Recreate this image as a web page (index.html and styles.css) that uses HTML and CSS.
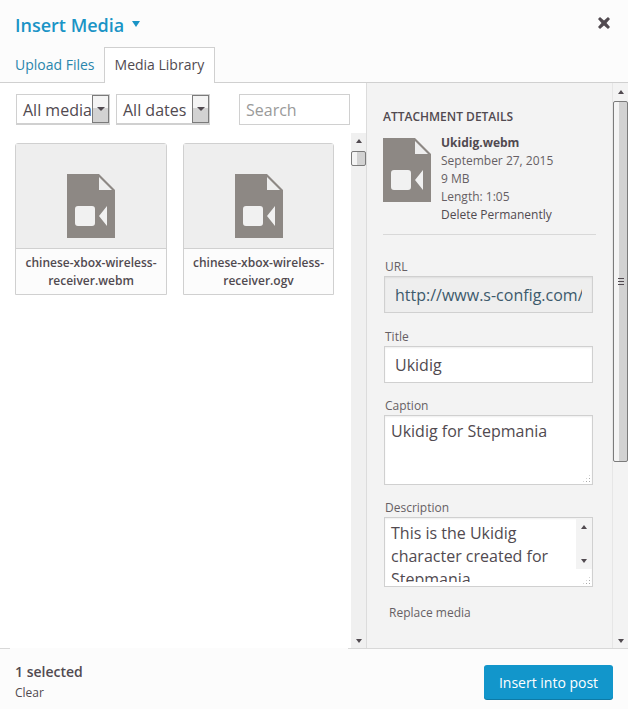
FILE: index.html
```html
<!DOCTYPE html>
<html lang="en">
<head>
<meta charset="utf-8">
<title>Insert Media</title>
<link rel="stylesheet" href="styles.css">
</head>
<body>
<div class="modal">
  <header class="head">
    <div class="title-row">
      <h1 class="title">Insert Media <svg class="caret" width="8" height="6" viewBox="0 0 8 6"><path d="M0 0h8L4 6z"/></svg></h1>
      <svg class="close" width="14" height="14" viewBox="0 0 14 14"><path d="M3 1 7 4.500 11 1l2 2-3.500 4 3.500 4-2 2-4-3.500L3 13l-2-2 3.500-4L1 3z"/></svg>
    </div>
    <nav class="tabs">
      <a class="tab">Upload Files</a>
      <a class="tab active">Media Library</a>
    </nav>
  </header>
  <main class="body">
    <section class="browser">
      <div class="toolbar">
        <div class="select"><span class="select-text">All media</span><span class="select-btn"><i></i></span></div>
        <div class="select"><span class="select-text">All dates</span><span class="select-btn"><i></i></span></div>
        <input class="search" type="text" placeholder="Search">
      </div>
      <div class="library">
        <div class="grid">
          <figure class="card">
            <div class="preview"><svg class="file" width="48" height="64" viewBox="0 0 48 64"><use href="#video-file"/></svg></div>
            <figcaption class="name">chinese-xbox-wireless-receiver.webm</figcaption>
          </figure>
          <figure class="card">
            <div class="preview"><svg class="file" width="48" height="64" viewBox="0 0 48 64"><use href="#video-file"/></svg></div>
            <figcaption class="name">chinese-xbox-wireless-receiver.ogv</figcaption>
          </figure>
        </div>
        <div class="scrollbar thin">
          <span class="arrow up"></span>
          <span class="thumb small"></span>
          <span class="spacer"></span>
          <span class="arrow down"></span>
        </div>
      </div>
    </section>
    <aside class="side">
      <div class="details">
        <h2 class="side-title">Attachment Details</h2>
        <div class="info">
          <svg class="file" width="48" height="64" viewBox="0 0 48 64"><use href="#video-file"/></svg>
          <div class="meta">
            <strong>Ukidig.webm</strong>
            <span>September 27, 2015</span>
            <span>9 MB</span>
            <span>Length: 1:05</span>
            <a>Delete Permanently</a>
          </div>
        </div>
        <label class="field first"><span class="label">URL</span><input class="control readonly" type="text" readonly value="http://www.s-config.com/wp-content/uploads/Ukidig.webm"></label>
        <label class="field"><span class="label">Title</span><input class="control" type="text" value="Ukidig"></label>
        <label class="field tight"><span class="label">Caption</span>
          <span class="area"><textarea class="control multi">Ukidig for Stepmania</textarea><span class="grip"></span></span>
        </label>
        <label class="field tight"><span class="label">Description</span>
          <span class="area clipped"><textarea class="control multi">This is the Ukidig character created for Stepmania.</textarea>
            <span class="area-bar"><span class="arrow up"></span><span class="arrow down"></span></span>
            <span class="grip"></span></span>
        </label>
        <a class="replace">Replace media</a>
      </div>
      <div class="scrollbar wide">
        <span class="arrow up"></span>
        <span class="thumb big"><span class="lines"></span></span>
        <span class="spacer"></span>
        <span class="arrow down"></span>
      </div>
    </aside>
  </main>
  <footer class="foot">
    <div class="selection">
      <strong>1 selected</strong>
      <a>Clear</a>
    </div>
    <button class="insert" type="button">Insert into post</button>
  </footer>
</div>
<svg class="defs" width="0" height="0">
  <symbol id="video-file" viewBox="0 0 48 64">
    <path fill="#8d8884" d="M0 0h32l16 16V64H0z"/>
    <path fill="#eeeeee" d="M32 3 45 16H32z"/>
    <path fill="#f1f1f1" d="M11 32h14a3 3 0 0 1 3 3v14a3 3 0 0 1-3 3H11a3 3 0 0 1-3-3V35a3 3 0 0 1 3-3zM40 32v20l-8-10z"/>
  </symbol>
</svg>
</body>
</html>
```
FILE: styles.css
```css
* { box-sizing: border-box; }
html, body { margin: 0; height: 100%; }
body {
  font-family: "Open Sans", sans-serif;
  color: #514a50;
  background: #fff;
  overflow: hidden;
}
.modal { display: flex; flex-direction: column; height: 709px; width: 628px; }
.defs { position: absolute; }

/* header */
.head {
  height: 83px;
  flex: none;
  background: #fcfcfc;
  border-bottom: 1px solid #d0d0d0;
  display: flex;
  flex-direction: column;
}
.title-row {
  flex: none;
  display: flex;
  justify-content: space-between;
  align-items: center;
  height: 47px;
  padding: 0 17px 0 15px;
}
.title { margin: 2px 0 0; font-size: 18px; font-weight: 600; line-height: 24px; color: #1a94c6; }
.caret { fill: #1a94c6; vertical-align: 5px; margin-left: 3px; }
.close { fill: #514a50; margin-bottom: 2px; }
.tabs { flex: none; display: flex; height: 36px; padding-left: 4px; }
.tab {
  height: 36px;
  padding: 0 8px 0 10px;
  font-size: 14px;
  line-height: 34px;
  color: #2a86ac;
  border: 1px solid transparent;
  border-bottom: 0;
  white-space: nowrap;
}
.tab.active { background: #fff; border-color: #d0d0d0; color: #514a50; width: 111px; padding: 0 10px; }

/* main */
.body { flex: 1; min-height: 0; display: flex; }
.browser { width: 366px; display: flex; flex-direction: column; background: #fff; }
.toolbar { display: flex; align-items: center; height: 50px; padding: 11px 16px 8px 16px; gap: 6px; }
.select {
  width: 94px;
  height: 31px;
  border: 1px solid #d0d0d0;
  border-width: 1px 1px 2px;
  background: #fff;
  display: flex;
  font-size: 16px;
  line-height: 31px;
}
.select-text { flex: 1; min-width: 0; padding-left: 6px; overflow: hidden; white-space: nowrap; }
.select-btn {
  width: 17px;
  flex: none;
  border: 1px solid #7b7b7b;
  background: linear-gradient(#f4f4f4 0 45%, #d2d2d2 45%);
  display: flex;
  align-items: center;
  justify-content: center;
}
.select-btn i { width: 0; height: 0; border: 4px solid transparent; border-top: 4px solid #514a50; border-bottom: 0; }
.search {
  width: 111px;
  height: 31px;
  margin-left: 23px;
  border: 1px solid #d0d0d0;
  padding: 0 6px;
  font: 16px "Open Sans", sans-serif;
  color: #514a50;
}
.search::placeholder { color: #9a9a9a; opacity: 1; }
.library { flex: 1; min-height: 0; display: flex; }
.grid { flex: 1; display: flex; align-items: flex-start; gap: 16px; padding: 10px 0 0 15px; }
.card {
  margin: 0;
  width: 152px;
  height: 152px;
  border: 1px solid #d0d0d0;
  border-radius: 3px 3px 0 0;
  background: #fcfcfc;
  display: flex;
  flex-direction: column;
}
.card + .card { width: 151px; }
.preview {
  height: 105px;
  background: #eee;
  border-bottom: 1px solid #d0d0d0;
  display: flex;
  align-items: center;
  justify-content: center;
  padding-top: 20px;
  flex: none;
}
.name {
  font-size: 12px;
  font-weight: 600;
  line-height: 18px;
  text-align: center;
  padding: 5px 8px 0;
}

/* scrollbars */
.scrollbar { width: 15px; flex: none; display: flex; flex-direction: column; align-items: center; background: #f0f0f0; padding-bottom: 1px; }
.scrollbar.thin { padding-top: 2px; }
.scrollbar.wide { width: 16px; background: #f3f3f3; border-left: 1px solid #e6e6e6; padding-top: 3px; }
.spacer { flex: 1; }
.arrow { width: 0; height: 0; border: 3.500px solid transparent; margin: 4px 0; }
.arrow.up { border-top: 0; border-bottom: 4px solid #514a50; }
.arrow.down { border-bottom: 0; border-top: 4px solid #514a50; }
.thumb { display: flex; align-items: center; justify-content: center; border: 1px solid #7b7b7b; border-radius: 2px; width: 100%; flex: none; background: linear-gradient(90deg, #f4f4f4 0 35%, #d2d2d2 35%); }
.thumb.small { height: 15px; margin-top: 4px; }
.thumb.big { height: 361px; margin-top: 3px; }
.lines { width: 6px; height: 7px; background: repeating-linear-gradient(#514a50 0 1px, transparent 1px 3px); }

/* sidebar */
.side { flex: 1; min-width: 0; display: flex; background: #f3f3f3; border-left: 1px solid #dcdcdc; }
.details { flex: 1; min-width: 0; padding: 25px 16px 0 16px; display: flex; flex-direction: column; }
.side-title { margin: 0; font-size: 12px; font-weight: 600; line-height: 18px; text-transform: uppercase; color: #514a50; }
.info {
  display: flex;
  gap: 10px;
  margin-top: 12px;
  padding-bottom: 22px;
  border-bottom: 1px solid #d8d8d8;
  height: 97px;
}
.meta { display: flex; flex-direction: column; font-size: 12px; line-height: 18px; margin-top: -4px; color: #665f64; }
.meta strong { font-weight: 700; color: #514a50; }
.meta a { color: #514a50; }
.field { display: block; margin: 15px 0 0 1px; width: 209px; }
.field.first { margin-top: 23px; }
.field.tight { margin-top: 14px; }
.label { display: block; font-size: 12px; line-height: 18px; color: #665f64; padding-left: 1px; }
.control {
  display: block;
  width: 100%;
  height: 37px;
  border: 1px solid #d0d0d0;
  background: #fff;
  padding: 0 10px;
  font: 16px "Open Sans", sans-serif;
  color: #514a50;
  box-shadow: inset 0 1px 2px rgba(0,0,0,.07);
  margin: 0;
}
.readonly { background: #eee; color: #3d5a6c; }
.area { display: block; position: relative; }
.multi { height: 70px; padding: 4px 6px; line-height: 23px; resize: none; overflow: hidden; }
.clipped::after { content: ""; position: absolute; left: 1px; right: 1px; bottom: 1px; height: 4px; background: #fff; }
.grip {
  position: absolute;
  z-index: 1;
  right: 2px;
  bottom: 2px;
  width: 9px;
  height: 9px;
  background: radial-gradient(circle, #aaa 0 1px, transparent 1px) 0 0 / 3px 3px;
  clip-path: polygon(100% 0, 100% 100%, 0 100%);
}
.area-bar {
  position: absolute;
  top: 1px;
  right: 1px;
  width: 16px;
  height: 51px;
  background: #f3f3f3;
  display: flex;
  flex-direction: column;
  justify-content: space-between;
  align-items: center;
  padding: 3px 0 2px;
}
.replace { font-size: 12px; line-height: 18px; margin: 17px 0 0 6px; color: #665f64; }

/* footer */
.foot {
  height: 61px;
  flex: none;
  background: #fcfcfc;
  border-top: 1px solid #d8d8d8;
  display: flex;
  justify-content: space-between;
  align-items: flex-start;
  padding: 16px 15px 0;
  position: relative;
}
.foot::before { content: ""; position: absolute; top: -1px; left: 10px; width: 338px; height: 1px; background: #fcfcfc; }
.selection { display: flex; flex-direction: column; }
.selection strong { font-size: 14px; font-weight: 600; line-height: 14px; }
.selection a { font-size: 12px; line-height: 14px; margin-top: 7px; }
.insert {
  width: 129px;
  height: 34px;
  border: 0;
  border-radius: 3px;
  background: #1296cb;
  box-shadow: 0 1px 0 #0d7aa6;
  color: #fff;
  font: 14px "Open Sans", sans-serif;
  padding: 0;
}
```
